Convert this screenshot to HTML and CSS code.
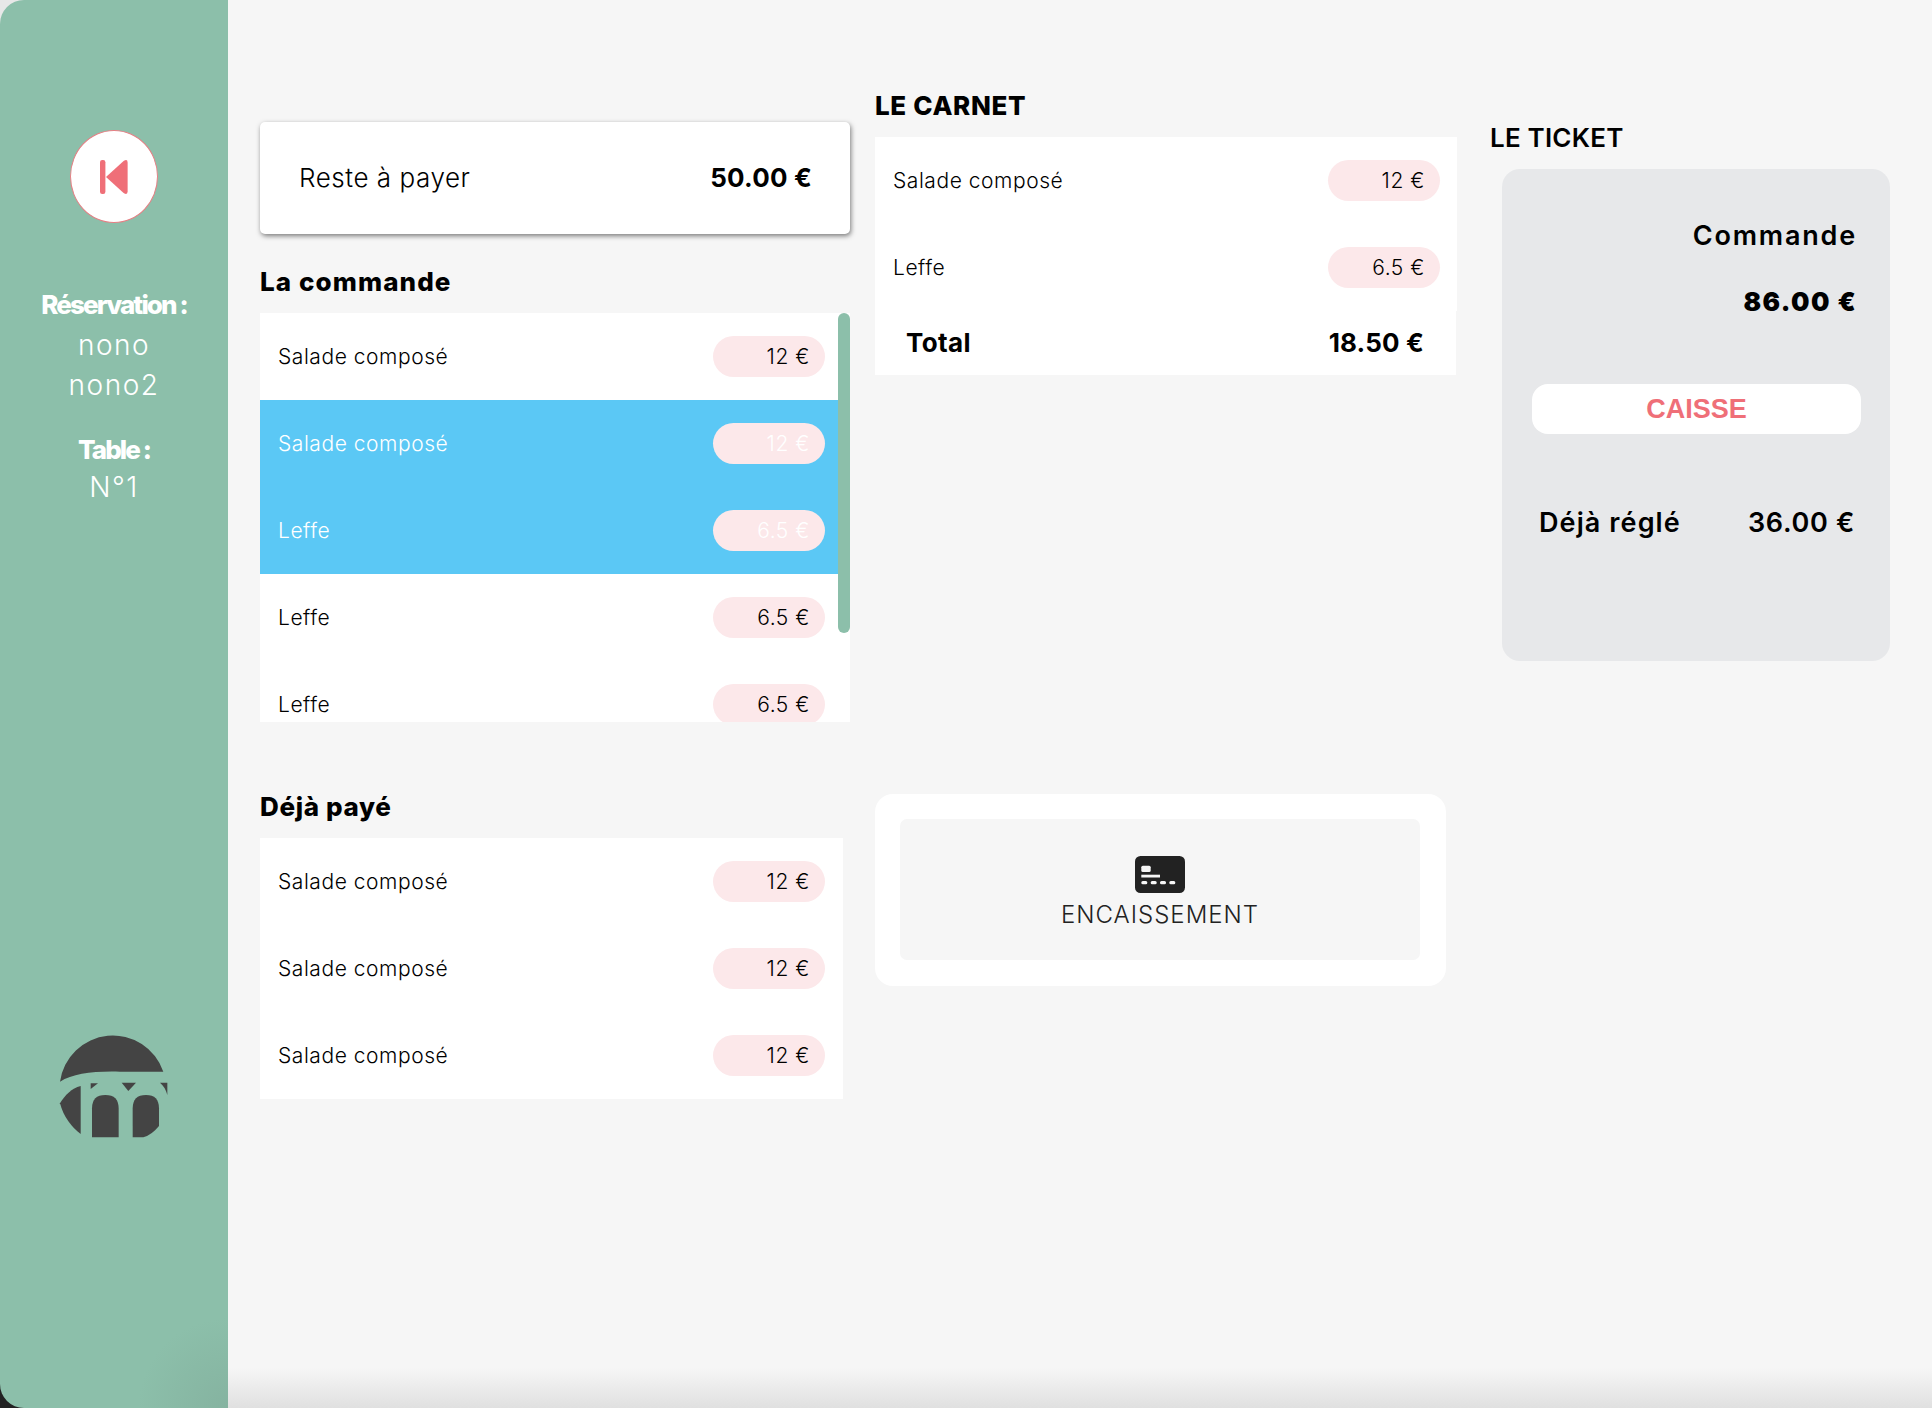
FILE: index.html
```html
<!DOCTYPE html>
<html lang="fr">
<head>
  <meta charset="UTF-8">
  <title>Encaissement</title>
  <meta name="viewport" content="width=device-width, initial-scale=1.0">
  <link rel="stylesheet" href="styles.css">
</head>
<body>
  <div class="app">
    <aside class="sidebar">
      <button class="back-btn" aria-label="Retour">
        <svg class="back-icon" viewBox="0 0 28 36">
          <rect x="0" y="1" width="5.4" height="34" rx="2.2"/>
          <path d="M6 18 L23.6 2 Q27.6 -0.4 27.6 3.5 V32.5 Q27.6 36.4 23.6 34 Z"/>
        </svg>
      </button>
      <div class="side-title side-title-first">Réservation :</div>
      <div class="side-value side-value-first">nono</div>
      <div class="side-value">nono2</div>
      <div class="side-title side-title-table">Table :</div>
      <div class="side-value side-value-table">N°1</div>
      <svg class="logo" viewBox="0 0 420 420">
        <path d="M60 185 A160 160 0 0 1 370 155 L240 155 C160 153 100 160 60 185 Z"/>
        <path d="M122 198 C95 205 75 225 60 250 C70 290 95 322 122 342 Z"/>
        <path d="M152 190 H174 L152 207 Z"/>
        <path d="M245 188 H288 L265 213 Z"/>
        <path d="M360 188 H382 V225 C378 210 372 198 360 188 Z"/>
        <path d="M156 352 V265 Q156 225 196 225 Q236 225 236 265 V352 Z"/>
        <path d="M278 352 V265 Q278 225 318 225 Q357 225 357 265 V318 Q335 345 310 352 Z"/>
      </svg>
    </aside>

    <main class="main">
      <section class="col col-order">
        <div class="due-card">
          <span class="due-label">Reste à payer</span>
          <span class="due-value">50.00 €</span>
        </div>

        <h2 class="heading heading-order">La commande</h2>
        <div class="list list-scroll">
          <div class="row"><span class="row-name">Salade composé</span><span class="pill">12 €</span></div>
          <div class="row selected"><span class="row-name">Salade composé</span><span class="pill">12 €</span></div>
          <div class="row selected"><span class="row-name">Leffe</span><span class="pill">6.5 €</span></div>
          <div class="row"><span class="row-name">Leffe</span><span class="pill">6.5 €</span></div>
          <div class="row"><span class="row-name">Leffe</span><span class="pill">6.5 €</span></div>
          <div class="thumb"></div>
        </div>

        <h2 class="heading heading-paid">Déjà payé</h2>
        <div class="list list-paid">
          <div class="row"><span class="row-name">Salade composé</span><span class="pill">12 €</span></div>
          <div class="row"><span class="row-name">Salade composé</span><span class="pill">12 €</span></div>
          <div class="row"><span class="row-name">Salade composé</span><span class="pill">12 €</span></div>
        </div>
      </section>

      <section class="col col-book">
        <h2 class="heading">LE CARNET</h2>
        <div class="list">
          <div class="row"><span class="row-name">Salade composé</span><span class="pill">12 €</span></div>
          <div class="row"><span class="row-name">Leffe</span><span class="pill">6.5 €</span></div>
        </div>
        <div class="total">
          <span>Total</span>
          <span class="total-value">18.50 €</span>
        </div>

        <div class="pay-card">
          <button class="pay-btn">
            <svg class="pay-icon" viewBox="0 0 50 37">
              <rect width="50" height="37" rx="5.5" fill="#222"/>
              <rect x="6.3" y="9.7" width="9.4" height="6.3" rx="1.5" fill="#f6f6f6"/>
              <rect x="6.3" y="18.7" width="18.7" height="2.8" fill="#f6f6f6"/>
              <rect x="6.3" y="25" width="6" height="3.2" rx="1.5" fill="#f6f6f6"/>
              <rect x="15.7" y="25" width="6" height="3.2" rx="1.5" fill="#f6f6f6"/>
              <rect x="25" y="25" width="6" height="3.2" rx="1.5" fill="#f6f6f6"/>
              <rect x="34.3" y="25" width="6" height="3.2" rx="1.5" fill="#f6f6f6"/>
            </svg>
            <span class="pay-text">ENCAISSEMENT</span>
          </button>
        </div>
      </section>

      <section class="col col-ticket">
        <h2 class="heading heading-ticket">LE TICKET</h2>
        <div class="ticket">
          <div class="ticket-title">Commande</div>
          <div class="ticket-amount">86.00 €</div>
          <button class="cash-btn">CAISSE</button>
          <div class="ticket-paid">
            <span class="ticket-paid-label">Déjà réglé</span>
            <span>36.00 €</span>
          </div>
        </div>
      </section>
    </main>
  </div>
</body>
</html>
```

FILE: styles.css
```css
:root {
  --green: #8cbfaa;
  --coral: #ef6f78;
  --pill: #fce8ea;
  --blue: #5bc8f5;
  --page: #f6f6f6;
}

html, body {
  margin: 0;
  padding: 0;
  height: 100%;
  font-family: "Inter", "Liberation Sans", sans-serif;
  color: #000;
}

body {
  background: linear-gradient(to bottom, #e8e8e8 50%, #222 50%);
}

button {
  font-family: inherit;
  border: none;
  cursor: pointer;
}

.app {
  display: flex;
  height: 1408px;
  overflow: hidden;
}

/* sidebar */
.sidebar {
  width: 228px;
  flex: none;
  box-sizing: border-box;
  padding-top: 130px;
  display: flex;
  flex-direction: column;
  align-items: center;
  color: #fff;
  background: radial-gradient(circle 90px at 100% 100%, #85b3a0, var(--green));
  border-radius: 24px 0 0 24px;
}

.back-btn {
  width: 88px;
  height: 93px;
  flex: none;
  padding: 0;
  border-radius: 50%;
  background: #fff;
  border: 1px solid #e67f84;
  display: flex;
  align-items: center;
  justify-content: center;
}

.back-icon {
  width: 28px;
  height: 36px;
  fill: var(--coral);
}

.side-title {
  font-size: 26px;
  line-height: 32px;
  font-weight: 800;
  letter-spacing: -1.9px;
}

.side-title-first {
  margin-top: 66px;
}

.side-title-table {
  margin-top: 29px;
}

.side-value {
  font-size: 28px;
  line-height: 40px;
  font-weight: 300;
  letter-spacing: 1.5px;
}

.side-value-first {
  margin-top: 4px;
}

.side-value-table {
  margin-top: 1px;
}

.logo {
  width: 140px;
  height: 140px;
  margin-top: auto;
  margin-bottom: 248px;
  margin-left: -9px;
  fill: #444;
}

/* main */
.main {
  flex: 1;
  display: flex;
  gap: 25px;
  padding-left: 32px;
  background: linear-gradient(to bottom, var(--page) calc(100% - 40px), #e0e0e0);
}

.col-order {
  width: 590px;
  padding-top: 122px;
}

.col-book {
  width: 591px;
  padding-top: 90px;
}

.col-ticket {
  width: 400px;
  padding-top: 122px;
}

.heading {
  margin: 0 0 15px;
  font-size: 26px;
  line-height: 32px;
  font-weight: 800;
  letter-spacing: 0.65px;
}

.heading-order {
  margin-top: 32px;
  letter-spacing: 1.1px;
}

.heading-paid {
  margin-top: 69px;
}

.heading-ticket {
  margin-left: -1px;
  font-weight: 600;
  letter-spacing: 0.2px;
}

.due-card {
  height: 112px;
  box-sizing: border-box;
  padding: 0 38px 2px 39px;
  display: flex;
  align-items: center;
  justify-content: space-between;
  background: #fff;
  border-radius: 5px;
  box-shadow: 1px 2px 5px rgba(0, 0, 0, 0.5);
}

.due-label {
  font-size: 26px;
  font-weight: 300;
  letter-spacing: 0.55px;
}

.due-value {
  font-size: 26px;
  font-weight: 700;
  letter-spacing: 0.2px;
}

/* lists */
.list {
  position: relative;
  background: #fff;
  width: 582px;
}

.list-scroll {
  width: 590px;
  height: 409px;
  overflow: hidden;
}

.list-scroll .row {
  width: 578px;
  padding-right: 13px;
}

.list-paid {
  width: 583px;
}

.list-paid .row {
  padding-right: 18px;
}

.row {
  height: 87px;
  box-sizing: border-box;
  padding: 0 17px 0 18px;
  display: flex;
  align-items: center;
  justify-content: space-between;
  font-size: 21px;
  font-weight: 300;
  letter-spacing: 0.55px;
}

.row.selected {
  background: var(--blue);
  color: #fff;
}

.pill {
  width: 112px;
  height: 41px;
  box-sizing: border-box;
  padding-right: 15px;
  line-height: 41px;
  text-align: right;
  background: var(--pill);
  border-radius: 21px;
}

.thumb {
  position: absolute;
  top: 0;
  right: 0;
  width: 12px;
  height: 320px;
  background: var(--green);
  border-radius: 6px;
}

.total {
  height: 64px;
  width: 581px;
  box-sizing: border-box;
  padding: 0 32px 2px 31px;
  display: flex;
  align-items: center;
  justify-content: space-between;
  background: #fff;
  font-size: 26px;
  font-weight: 700;
  letter-spacing: 0.35px;
}

.total-value {
  letter-spacing: 0.15px;
}

/* encaissement */
.pay-card {
  width: 571px;
  height: 192px;
  box-sizing: border-box;
  margin-top: 419px;
  padding: 25px 26px 26px 25px;
  background: #fff;
  border-radius: 18px;
}

.pay-btn {
  width: 100%;
  height: 100%;
  padding: 37px 0 0;
  display: flex;
  flex-direction: column;
  align-items: center;
  background: var(--page);
  border-radius: 7px;
}

.pay-icon {
  width: 50px;
  height: 37px;
  flex: none;
}

.pay-text {
  margin-top: 7px;
  font-size: 24px;
  line-height: 30px;
  font-weight: 300;
  letter-spacing: 1px;
  color: #222;
}

/* ticket */
.ticket {
  width: 388px;
  height: 492px;
  box-sizing: border-box;
  margin-left: 11px;
  padding: 50px 33px 0 30px;
  background: #e7e8ea;
  border-radius: 18px;
  display: flex;
  flex-direction: column;
}

.ticket-title {
  text-align: right;
  font-size: 27px;
  line-height: 34px;
  font-weight: 600;
  letter-spacing: 1.8px;
}

.ticket-amount {
  margin-top: 32px;
  text-align: right;
  font-size: 26px;
  line-height: 34px;
  font-weight: 900;
  letter-spacing: 1.4px;
}

.cash-btn {
  width: 329px;
  height: 50px;
  flex: none;
  margin-top: 65px;
  padding: 0;
  background: #fff;
  border-radius: 16px;
  color: var(--coral);
  font-family: "Liberation Sans", sans-serif;
  font-size: 27px;
  font-weight: 700;
}

.ticket-paid {
  margin-top: 72px;
  margin-left: 7px;
  margin-right: 2px;
  display: flex;
  justify-content: space-between;
  font-size: 27px;
  line-height: 34px;
  font-weight: 600;
  letter-spacing: 0.7px;
}

.ticket-paid-label {
  letter-spacing: 1.1px;
}
```
